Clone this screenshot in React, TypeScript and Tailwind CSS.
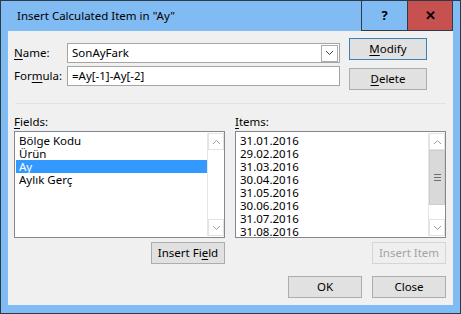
import React from "react";

const font = "font-['Noto_Sans',sans-serif]";

function Chevron({ up, className }: { up?: boolean; className?: string }) {
  return (
    <svg width="9" height="6" viewBox="0 0 9 6" className={className}>
      <path
        d={up ? "M1 5 L4.5 1.5 L8 5" : "M1 1 L4.5 4.5 L8 1"}
        fill="none"
        stroke="currentColor"
        strokeWidth="1"
      />
    </svg>
  );
}

function U({ children }: { children: React.ReactNode }) {
  return <span className="underline underline-offset-[2px]">{children}</span>;
}

type BtnProps = {
  children: React.ReactNode;
  w: string;
  isDefault?: boolean;
  disabled?: boolean;
};

function Btn({ children, w, isDefault, disabled }: BtnProps) {
  const tone = disabled
    ? "border-[#d5d5d5] bg-[#efefef] text-[#a3a3a3]"
    : isDefault
      ? "border-[#3c7fb1] bg-[#e1e1e1] text-black"
      : "border-[#adadad] bg-[#e1e1e1] text-black";
  return (
    <button
      type="button"
      className={`flex h-[22px] items-center justify-center border text-[11.5px] leading-none ${w} ${tone}`}
    >
      {children}
    </button>
  );
}

function ScrollBar({ thumb }: { thumb?: boolean }) {
  return (
    <div className="flex w-[17px] flex-col border-l border-[#e6e6e6] bg-white">
      <div className="flex h-[17px] items-center justify-center border border-[#e3e3e3] text-[#a0a0a0]">
        <Chevron up />
      </div>
      {thumb ? (
        <div className="flex h-[55px] flex-col items-center justify-center gap-[2px] border border-[#cdcdcd] bg-[#d9d9d9]">
          <div className="h-px w-[7px] bg-[#6f6f6f]" />
          <div className="h-px w-[7px] bg-[#6f6f6f]" />
          <div className="h-px w-[7px] bg-[#6f6f6f]" />
        </div>
      ) : null}
      <div className="flex-1" />
      <div className="flex h-[17px] items-center justify-center border border-[#e3e3e3] text-[#a0a0a0]">
        <Chevron />
      </div>
    </div>
  );
}

function ListBox({
  items,
  selected,
  thumb,
}: {
  items: string[];
  selected?: number;
  thumb?: boolean;
}) {
  return (
    <div className="flex h-[107px] w-[211px] overflow-hidden border border-[#828790] bg-white">
      <div className="flex-1 pl-px pt-[2px]">
        {items.map((it, i) => (
          <div
            key={it}
            className={`h-[13px] pl-[3px] text-[11.5px] leading-[13px] ${
              i === selected ? "bg-[#3399ff] text-white" : "text-black"
            }`}
          >
            {it}
          </div>
        ))}
      </div>
      <div className="flex py-px">
        <ScrollBar thumb={thumb} />
      </div>
    </div>
  );
}

export default function App() {
  const fields = ["Bölge Kodu", "Ürün", "Ay", "Aylık Gerç"];
  const items = [
    "31.01.2016",
    "29.02.2016",
    "31.03.2016",
    "30.04.2016",
    "31.05.2016",
    "30.06.2016",
    "31.07.2016",
    "31.08.2016",
  ];

  return (
    <div
      className={`flex h-[314px] w-[461px] flex-col border border-[#2e3a46] bg-[#80bbf4] ${font} text-[11.5px] text-black`}
    >
      {/* title bar */}
      <div className="flex h-[30px] items-stretch pr-[7px]">
        <div className="flex flex-1 items-center pb-px pl-[16px] text-[11.5px]">
          Insert Calculated Item in "Ay"
        </div>
        <div className="flex w-[46px] items-center justify-center border-b border-l border-[#2e3a46] text-[13px] font-bold">
          ?
        </div>
        <div className="flex w-[46px] items-center justify-center border-b border-l border-r border-[#2e3a46] bg-[#c75050] text-[13px] font-bold">
          ✕
        </div>
      </div>

      {/* client */}
      <div className="mx-[7px] flex h-[274px] w-[445px] flex-col bg-[#f0f0f0]">
        <div className="flex">
          <div className="flex w-[335px] flex-col gap-[3px] pl-[6px] pt-[12px]">
            <div className="flex h-[20px] items-center">
              <div className="w-[53px]">
                <U>N</U>ame:
              </div>
              <div className="flex h-[20px] w-[273px] items-center justify-between border border-[#a5a5a5] bg-white pl-[4px] pr-px">
                <span>SonAyFark</span>
                <div className="flex h-[17px] w-[17px] items-center justify-center border border-[#acacac] bg-white text-[#404040]">
                  <Chevron />
                </div>
              </div>
            </div>
            <div className="flex h-[20px] items-center">
              <div className="w-[53px]">
                For<U>m</U>ula:
              </div>
              <div className="flex h-[20px] w-[273px] items-center border border-[#a5a5a5] bg-white pl-[4px]">
                =Ay[-1]-Ay[-2]
              </div>
            </div>
          </div>
          <div className="flex flex-col gap-[8px] pl-[6px] pt-[7px]">
            <Btn w="w-[78px]" isDefault>
              <U>M</U>odify
            </Btn>
            <Btn w="w-[78px]">
              <U>D</U>elete
            </Btn>
          </div>
        </div>

        <div className="mx-[7px] mt-[13px] h-px bg-[#dfe3e8]" />

        <div className="mt-[10px] flex gap-[10px] pl-[6px]">
          <div className="flex flex-col">
            <div className="h-[17px] leading-[15px]">
              <U>F</U>ields:
            </div>
            <ListBox items={fields} selected={2} />
            <div className="mt-[4px] flex justify-end">
              <Btn w="w-[74px]">
                Insert Fi<U>e</U>ld
              </Btn>
            </div>
          </div>
          <div className="flex flex-col">
            <div className="h-[17px] leading-[15px]">
              <U>I</U>tems:
            </div>
            <ListBox items={items} thumb />
            <div className="mt-[4px] flex justify-end">
              <Btn w="w-[74px]" disabled>
                Insert Item
              </Btn>
            </div>
          </div>
        </div>

        <div className="mt-[12px] flex justify-end gap-[10px] pr-[7px]">
          <Btn w="w-[74px]">OK</Btn>
          <Btn w="w-[74px]">Close</Btn>
        </div>
      </div>
    </div>
  );
}
